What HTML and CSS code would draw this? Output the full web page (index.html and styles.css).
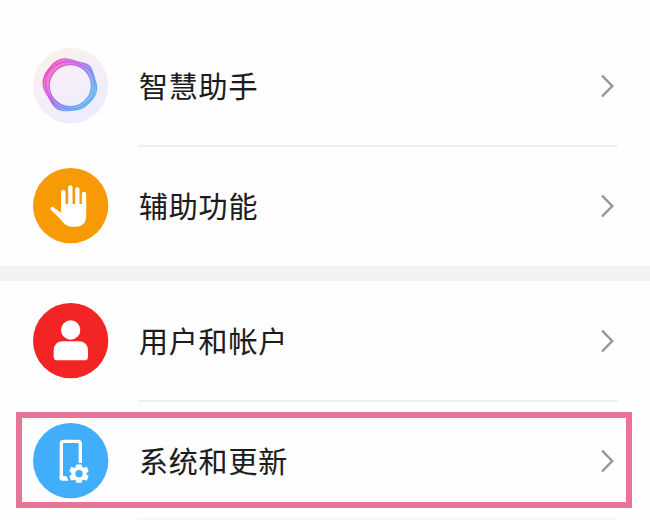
FILE: index.html
```html
<!DOCTYPE html>
<html lang="zh-CN">
<head>
<meta charset="utf-8">
<title>设置</title>
<link rel="stylesheet" href="styles.css">
</head>
<body>
<main class="settings">
  <section class="group">
    <div class="row">
      <svg class="icon" viewBox="39 24 228 228">
        <defs>
          <linearGradient id="disc" x1="0" y1="0" x2="0.6" y2="1">
            <stop offset="0" stop-color="#fbf2e4"/><stop offset="0.45" stop-color="#f7eef7"/><stop offset="1" stop-color="#edecfd"/>
          </linearGradient>
          <linearGradient id="ring" gradientUnits="userSpaceOnUse" x1="85" y1="85" x2="205" y2="185">
            <stop offset="0" stop-color="#ee2cb0"/><stop offset="0.3" stop-color="#cb3cdf"/><stop offset="0.55" stop-color="#7b5bec"/><stop offset="1" stop-color="#38a8f0"/>
          </linearGradient>
        </defs>
        <circle cx="152" cy="137" r="113" fill="url(#disc)"/>
        <path fill="url(#ring)" fill-opacity="0.6" fill-rule="evenodd" d="M122 57C145 50 168 65 194 70C219 77 219 102 229 129C238 160 217 179 202 194C184 214 145 213 122 211C103 208 93 190 82 167C66 145 64 119 76 98C90 80 101 63 122 57ZM151 75A62 62 0 1 0 151 199A62 62 0 1 0 151 75Z"/>
        <g fill="none" stroke="url(#ring)" stroke-width="3.5" stroke-opacity="0.6">
          <path d="M122 58C145 50 168 67 193 70C219 76 218 102 228 129C238 160 217 179 202 194C184 214 145 213 124 211C103 208 97 185 83 167C66 145 65 119 78 99C90 81 101 65 122 58Z"/>
          <circle cx="151" cy="137" r="63"/>
          <path d="M126 67C153 61 174 69 201 83C222 96 224 125 223 149C220 177 203 190 180 202C151 211 115 207 100 186C86 165 74 145 77 119C80 94 101 74 126 67Z"/>
        </g>
      </svg>
      <div class="body"><span class="label">智慧助手</span>
        <svg class="chevron" viewBox="0 0 16 26"><path d="M3 2.5 13.2 13 3 23.5"/></svg></div>
    </div>
    <div class="row">
      <svg class="icon" viewBox="39 24 228 228">
        <circle cx="152" cy="137" r="113" fill="#f89a06"/>
        <g fill="none" stroke="#fff" stroke-linecap="round">
          <path stroke-width="13" d="M130 96V150M151 82V145M172 88V145M192 102V150"/>
          <path stroke-width="11" d="M97 146 122 170"/>
        </g>
        <path fill="#fff" d="M123.5 134Q126 129 136 132H198.5V168Q198 200 168 200H158Q141 200 130 188L101 152 108 147 123.5 158Z"/>
      </svg>
      <div class="body"><span class="label">辅助功能</span>
        <svg class="chevron" viewBox="0 0 16 26"><path d="M3 2.5 13.2 13 3 23.5"/></svg></div>
    </div>
  </section>
  <section class="group">
    <div class="row">
      <svg class="icon" viewBox="39 24 228 228">
        <circle cx="152" cy="137" r="113" fill="#f32424"/>
        <circle cx="152" cy="105" r="29" fill="#fff"/>
        <path fill="#fff" d="M101 185V168Q101 139 130 139H175Q204 139 204 168V185Q204 196 193 196H112Q101 196 101 185Z"/>
      </svg>
      <div class="body"><span class="label">用户和帐户</span>
        <svg class="chevron" viewBox="0 0 16 26"><path d="M3 2.5 13.2 13 3 23.5"/></svg></div>
    </div>
    <div class="row selected">
      <svg class="icon" viewBox="69 54 228 228">
        <circle cx="182" cy="167" r="113" fill="#41aefc"/>
        <path fill="none" stroke="#fff" stroke-width="10" stroke-linejoin="round" d="M211 174V116Q211 109 204 109H161Q154 109 154 116V222"/>
        <path fill="#fff" d="M149 213H165Q172 213 175 227H157Q149 227 149 220Z"/>
        <g transform="translate(207 206)">
          <path fill="#fff" stroke="#fff" stroke-width="5" stroke-linejoin="round" d="M-6-25H6L8-18 14-15 22-18 26-8 20-3V3L26 8 22 18 14 15 8 18 6 25H-6L-8 18-14 15-22 18-26 8-20 3V-3L-26-8-22-18-14-15-8-18Z"/>
          <circle r="11" fill="#41aefc"/>
        </g>
      </svg>
      <div class="body"><span class="label">系统和更新</span>
        <svg class="chevron" viewBox="0 0 16 26"><path d="M3 2.5 13.2 13 3 23.5"/></svg></div>
    </div>
  </section>
</main>
</body>
</html>
```
FILE: styles.css
```css
body {
  margin: 0;
  background: #fefefe;
  font-family: "Noto Sans CJK SC", sans-serif;
  color: #1c1c1c;
}

.settings {
  height: 520px;
  padding-top: 26px;
  box-sizing: border-box;
  overflow: hidden;
}

.group + .group {
  border-top: 15px solid #f2f2f2;
}

.row {
  position: relative;
  display: flex;
  align-items: center;
  height: 120px;
  padding: 0 32px 0 33px;
}

.icon {
  flex: none;
  width: 76px;
  height: 76px;
  margin-right: 29px;
}

.body {
  flex: 1;
  display: flex;
  align-items: center;
  justify-content: space-between;
  height: 121px;
  margin-bottom: -1px;
  box-sizing: border-box;
  border-bottom: 2px solid #efefef;
  padding: 1px 3px 0 1px;
}

.group:first-child .row:last-child .body {
  border-bottom-color: transparent;
}

.selected .body {
  height: 119px;
  margin-bottom: 1px;
  padding-top: 3px;
  border-bottom-color: #f7f7f7;
}

.label {
  margin-top: -3px;
  font-size: 29px;
  line-height: 40px;
  letter-spacing: 0.8px;
  -webkit-text-stroke: 0.1px #1c1c1c;
}

.chevron {
  width: 16px;
  height: 26px;
  fill: none;
  stroke: #979797;
  stroke-width: 2.5;
}

.selected::after {
  content: "";
  position: absolute;
  left: 16px;
  top: 11px;
  width: 616px;
  height: 96px;
  box-sizing: border-box;
  border: 6px solid #e87497;
}
```
